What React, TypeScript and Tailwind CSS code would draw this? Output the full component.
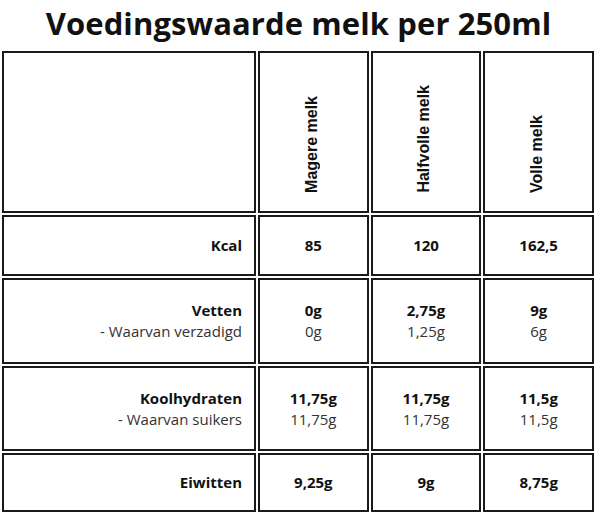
export default function App() {
  const cols = ['Magere melk', 'Halfvolle melk', 'Volle melk'];

  const rows = [
    { label: 'Kcal', values: ['85', '120', '162,5'], h: 'h-[61px]' },
    {
      label: 'Vetten',
      sub: '- Waarvan verzadigd',
      values: ['0g', '2,75g', '9g'],
      subValues: ['0g', '1,25g', '6g'],
      h: 'h-[86px]',
    },
    {
      label: 'Koolhydraten',
      sub: '- Waarvan suikers',
      values: ['11,75g', '11,75g', '11,5g'],
      subValues: ['11,75g', '11,75g', '11,5g'],
      h: 'h-[85px]',
    },
    { label: 'Eiwitten', values: ['9,25g', '9g', '8,75g'], h: 'h-[59px]' },
  ];

  const cell = 'border-2 border-[#1a1a1a] bg-white';

  return (
    <div className="w-[597px] h-[515px] bg-white font-['Open_Sans',sans-serif] text-[#111]">
      <h1 className="h-[51px] pt-[1px] text-center text-[31px] font-bold leading-[44px] tracking-[0.1px]">
        Voedingswaarde melk per 250ml
      </h1>

      <div className="ml-[2px] w-[592px] grid grid-cols-[254px_1fr_1fr_1fr] gap-[2px]">
        {/* header row */}
        <div className={`${cell} h-[162px]`}></div>
        {cols.map((c) => (
          <div key={c} className={`${cell} h-[162px] flex items-end justify-center pb-[18px] pr-[3px]`}>
            <span className="[writing-mode:vertical-rl] rotate-180 font-['Liberation_Sans',Arial,sans-serif] text-[16px] font-bold leading-[20px]">
              {c}
            </span>
          </div>
        ))}

        {rows.map((r) => (
          <>
            <div
              key={r.label}
              className={`${cell} ${r.h} flex flex-col justify-center items-end pr-[12px] text-[15px] leading-[21px]`}
            >
              <span className="font-bold">{r.label}</span>
              {r.sub && <span className="text-[#333]">{r.sub}</span>}
            </div>
            {r.values.map((v, i) => (
              <div
                key={r.label + i}
                className={`${cell} ${r.h} flex flex-col justify-center items-center text-[15px] leading-[21px]`}
              >
                <span className="font-bold">{v}</span>
                {r.subValues && <span className="text-[#333]">{r.subValues[i]}</span>}
              </div>
            ))}
          </>
        ))}
      </div>
    </div>
  );
}
